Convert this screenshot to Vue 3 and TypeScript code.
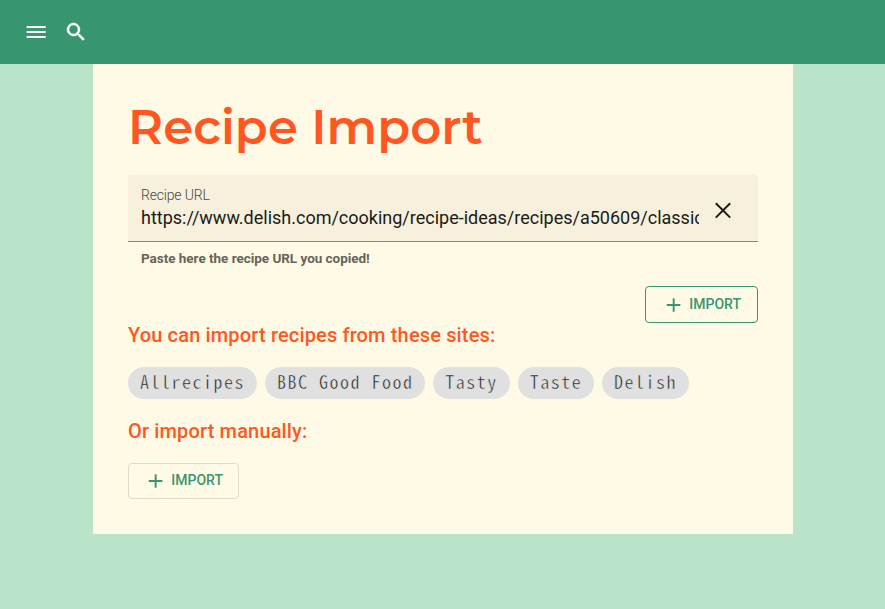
<script setup lang="ts">
import { ref } from 'vue'

const url = ref<string>('https://www.delish.com/cooking/recipe-ideas/recipes/a50609/classic-cheesecake-recipe/')
const sites: string[] = ['Allrecipes', 'BBC Good Food', 'Tasty', 'Taste', 'Delish']
</script>

<template>
  <div class="page">
    <header class="topbar">
      <button class="icon-button" aria-label="Menu">
        <svg width="24" height="24" viewBox="0 0 24 24"><path d="M2.7 18h19v-2h-19zm0-5h19v-2h-19zm0-5h19V6h-19z" /></svg>
      </button>
      <button class="icon-button search" aria-label="Search">
        <svg width="24" height="24" viewBox="0 0 24 24"><path d="M15.5 14h-.79l-.28-.27A6.47 6.47 0 0 0 16 9.5 6.5 6.5 0 1 0 9.5 16c1.61 0 3.09-.59 4.23-1.57l.27.28v.79l5 4.99L20.49 19zm-6 0C7.01 14 5 11.99 5 9.5S7.01 5 9.5 5 14 7.01 14 9.5 11.99 14 9.5 14z" /></svg>
      </button>
    </header>
    <main class="card">
      <h1>Recipe Import</h1>
      <div class="field">
        <label class="field-body">
          <span class="field-label">Recipe URL</span>
          <input v-model="url" type="text" spellcheck="false" />
        </label>
        <button class="clear" aria-label="Clear" @click="url = ''">
          <svg width="24" height="24" viewBox="0 0 24 24"><path d="M4.8 5.2l14.4 14.4M19.2 5.2L4.8 19.6" /></svg>
        </button>
      </div>
      <p class="hint">Paste here the recipe URL you copied!</p>
      <div class="actions">
        <button class="button primary">
          <svg width="16" height="16" viewBox="0 0 16 16"><path d="M8 1v14M.8 8h14.2" /></svg>
          <span>IMPORT</span>
        </button>
      </div>
      <h2>You can import recipes from these sites:</h2>
      <ul class="chips">
        <li v-for="site in sites" :key="site">{{ site }}</li>
      </ul>
      <h2>Or import manually:</h2>
      <button class="button manual">
        <svg width="16" height="16" viewBox="0 0 16 16"><path d="M8 1v14M.8 8h14.2" /></svg>
        <span>IMPORT</span>
      </button>
    </main>
  </div>
</template>

<style>
body {
  margin: 0;
  background: #b9e4c9;
}
</style>

<style scoped>
* {
  box-sizing: border-box;
}
.page {
  min-height: 609px;
  background: #b9e4c9;
  font-family: Roboto, sans-serif;
}
button {
  font-family: inherit;
  cursor: pointer;
}
.topbar {
  height: 64px;
  padding-left: 24px;
  display: flex;
  align-items: center;
  gap: 16px;
  background: #37966f;
}
.icon-button,
.clear {
  width: 24px;
  height: 24px;
  padding: 0;
  border: 0;
  background: none;
}
.icon-button svg,
.clear svg {
  display: block;
}
.icon-button path {
  fill: #fff;
}
.search path {
  stroke: #fff;
  stroke-width: 0.45;
}
.card {
  width: 700px;
  height: 470px;
  margin: 0 auto 0 93px;
  padding: 35px;
  background: #fffae6;
}
h1 {
  margin: 0;
  height: 76px;
  font: 600 48px/57px Montserrat, Inter, sans-serif;
  letter-spacing: 0.1px;
  white-space: nowrap;
  color: #ff5722;
}
.field {
  height: 67px;
  padding: 0 23px 0 13px;
  display: flex;
  align-items: center;
  gap: 12px;
  background: #f6f0dc;
  border-bottom: 1px solid #87877a;
  border-radius: 4px 4px 0 0;
}
.field-body {
  flex: 1;
  min-width: 0;
}
.field-label {
  display: block;
  margin-top: 1px;
  font-size: 14px;
  line-height: 16px;
  font-weight: 300;
  letter-spacing: -0.18px;
  color: #4a4842;
}
input {
  display: block;
  width: 100%;
  height: 28px;
  padding: 1px 0 0;
  border: 0;
  outline: 0;
  background: none;
  color: #1b1b18;
  font: 400 18px/27px Roboto, sans-serif;
}
.clear {
  margin-top: 4px;
}
.clear path {
  fill: none;
  stroke: #1b1b18;
  stroke-width: 2;
}
.hint {
  margin: 8px 0 0 13px;
  font-size: 13.5px;
  line-height: 16px;
  font-weight: 700;
  letter-spacing: -0.03px;
  color: #66645c;
}
.actions {
  margin-top: 20px;
  display: flex;
  justify-content: flex-end;
}
.button {
  display: flex;
  align-items: center;
  gap: 8px;
  height: 37px;
  padding: 0 16px 1px 20px;
  background: none;
  border: 1px solid #37966f;
  border-radius: 4px;
  color: #37966f;
  font-size: 14px;
  font-weight: 500;
}
.button svg {
  margin-top: 2px;
}
.button path {
  stroke: #37966f;
  stroke-width: 2;
}
.primary {
  width: 113px;
}
h2 {
  margin: 0;
  font-size: 20px;
  line-height: 24px;
  font-weight: 500;
  letter-spacing: 0.15px;
  color: #ff5722;
}
.chips {
  display: flex;
  gap: 7.9px;
  margin: 20px 0;
  padding: 0;
  list-style: none;
}
.chips li {
  height: 32px;
  padding: 0 12px;
  border-radius: 16px;
  background: #e0e0e0;
  color: #1c1c1c;
  font: 300 18px/28px "Noto Sans Mono CJK JP", "Liberation Mono", monospace;
  letter-spacing: 1.5px;
  white-space: nowrap;
  -webkit-text-stroke: 0.5px #e0e0e0;
}
.manual {
  margin-top: 20px;
  width: 111px;
  height: 36px;
  padding: 0 15px 2px 19px;
  border-color: #dfdcc6;
}
</style>
